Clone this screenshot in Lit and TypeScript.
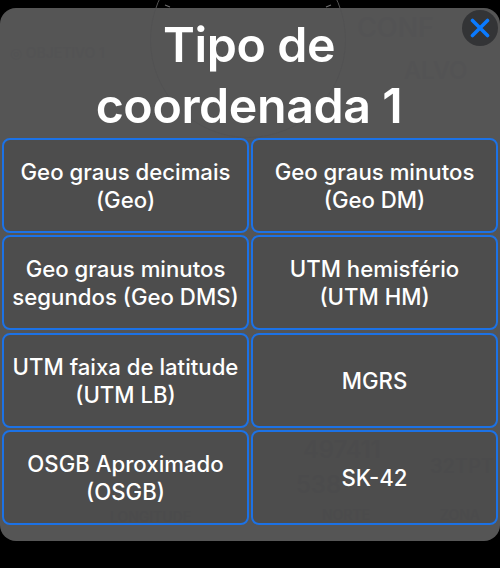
import { LitElement, html, css } from "lit";
import { customElement } from "lit/decorators.js";

const OPTIONS = [
  ["Geo graus decimais", "(Geo)"],
  ["Geo graus minutos", "(Geo DM)"],
  ["Geo graus minutos", "segundos (Geo DMS)"],
  ["UTM hemisfério", "(UTM HM)"],
  ["UTM faixa de latitude", "(UTM LB)"],
  ["MGRS"],
  ["OSGB Aproximado", "(OSGB)"],
  ["SK-42"],
];

// Content of the screen behind the translucent sheet, barely visible through it.
const GHOSTS = [
  { t: "◎ OBJETIVO 1", x: 10, y: 38, s: 14 },
  { t: "CONF", x: 357, y: 6, s: 27 },
  { t: "ALVO", x: 404, y: 51, s: 24 },
  { t: "497411", x: 303, y: 430, s: 24 },
  { t: "538", x: 296, y: 465, s: 24 },
  { t: "32TPT", x: 430, y: 448, s: 20 },
  { t: "NORTE", x: 322, y: 500, s: 14 },
  { t: "ZONA", x: 440, y: 500, s: 14 },
  { t: "LONGITUDE", x: 110, y: 502, s: 14 },
];

@customElement("app-root")
export class AppRoot extends LitElement {
  static styles = css`
    :host {
      display: block;
      width: 500px;
      height: 568px;
      background: #000;
      overflow: hidden;
      position: relative;
      font-family: Inter, "Liberation Sans", sans-serif;
    }
    .dial {
      position: absolute;
      left: 150px;
      top: -58px;
      width: 196px;
      height: 196px;
    }
    .wrap {
      position: relative;
      padding-top: 8px;
    }
    .panel {
      position: relative;
      height: 533px;
      box-sizing: border-box;
      background: #555555;
      border-radius: 16px;
      display: flex;
      flex-direction: column;
      padding: 0 2px;
      overflow: hidden;
    }
    .ghosts {
      position: absolute;
      inset: 0;
    }
    .ghost {
      position: absolute;
      color: #535354;
      font-weight: 500;
      line-height: 1;
      white-space: nowrap;
    }
    .ring {
      position: absolute;
      left: 150px;
      top: -66px;
      width: 196px;
      height: 196px;
      box-sizing: border-box;
      border: 1px solid #525253;
      border-radius: 50%;
    }
    h1 {
      position: relative;
      margin: 0;
      height: 130px;
      box-sizing: border-box;
      padding: 6px 2px 0 0;
      color: #fff;
      font-size: 48.3px;
      line-height: 61px;
      font-weight: 600;
      text-align: center;
      letter-spacing: -0.4px;
    }
    .grid {
      position: relative;
      display: grid;
      grid-template-columns: 247px 247px;
      grid-auto-rows: 95px;
      gap: 2.4px 2px;
    }
    .cell {
      box-sizing: border-box;
      border: 2px solid #1c72e6;
      border-radius: 8px;
      background: rgba(0, 0, 0, 0.09);
      color: #fff;
      font-size: 22.2px;
      line-height: 28px;
      font-weight: 500;
      padding-top: 1px;
      display: flex;
      flex-direction: column;
      align-items: center;
      justify-content: center;
      text-align: center;
      white-space: nowrap;
    }
    .close {
      position: absolute;
      top: 10px;
      right: 2px;
      width: 36px;
      height: 36px;
      border-radius: 50%;
      background: #333436;
      display: flex;
      align-items: center;
      justify-content: center;
    }
    .close svg {
      width: 20px;
      height: 20px;
    }
  `;

  render() {
    return html`
      <svg class="dial" viewBox="0 0 196 196" fill="none">
        <circle cx="98" cy="98" r="97.5" stroke="#555" />
        <path d="M15 63l5 2M181 63l-5 2" stroke="#6e6e6e" stroke-width="1.2" />
      </svg>
      <div class="wrap">
        <div class="panel">
          <div class="ghosts">
            <div class="ring"></div>
            ${GHOSTS.map(
              (g) =>
                html`<span class="ghost" style="left:${g.x}px;top:${g.y}px;font-size:${g.s}px">${g.t}</span>`
            )}
          </div>
          <h1>Tipo de<br />coordenada 1</h1>
          <div class="grid">
            ${OPTIONS.map(
              (lines) => html`<div class="cell">${lines.map((l) => html`<span>${l}</span>`)}</div>`
            )}
          </div>
        </div>
        <div class="close">
          <svg viewBox="0 0 20 20" fill="none" stroke="#0a7aff" stroke-width="3.6" stroke-linecap="round">
            <path d="M2.5 2.5 17.5 17.5M17.5 2.5 2.5 17.5" />
          </svg>
        </div>
      </div>
    `;
  }
}
